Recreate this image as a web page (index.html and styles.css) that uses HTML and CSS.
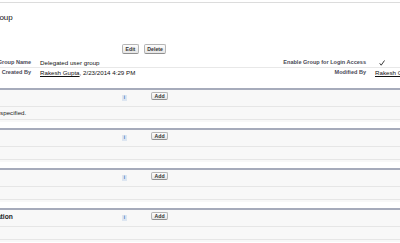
FILE: index.html
```html
<!doctype html>
<html lang="en">
  <head>
    <meta charset="utf-8" />
    <title>Delegated Group</title>
    <link rel="stylesheet" href="styles.css">
  </head>
  <body>
    <div class="page">
      <div class="topRule"></div>
      <h2 class="recordName">Delegated user group</h2>

      <!-- Detail block -->
      <div class="detailButtons">
        <button>Edit</button>
        <button>Delete</button>
      </div>
      <div class="detailList">
        <div class="labelCol">Group Name</div>
        <div class="dataCol">Delegated user group</div>
        <div class="labelCol">Enable Group for Login Access</div>
        <div class="dataCol">
          <svg class="check" width="6" height="6" viewBox="0 0 6 6">
            <path d="M0.7 3.3 L2.2 5.2 L5.5 0.5" fill="none" stroke="#222" stroke-width="0.9" />
          </svg>
        </div>
        <div class="labelCol last">Created By</div>
        <div class="dataCol last"><a href="#">Rakesh Gupta</a>, 2/23/2014 4:29 PM</div>
        <div class="labelCol last">Modified By</div>
        <div class="dataCol last"><a href="#">Rakesh Gupta</a>, 2/23/2014 4:29 PM</div>
      </div>

      <!-- Related lists -->
      <div class="relList">
        <div class="relHeader">
          <div class="relTitle link"></div>
          <span class="help">i</span>
          <button class="small">Add</button>
        </div>
        <div class="relBody">No delegated administrators specified.</div>
      </div>

      <div class="relList">
        <div class="relHeader">
          <div class="relTitle"></div>
          <span class="help">i</span>
          <button class="small">Add</button>
        </div>
        <div class="relBody"></div>
      </div>

      <div class="relList">
        <div class="relHeader">
          <div class="relTitle"></div>
          <span class="help">i</span>
          <button class="small">Add</button>
        </div>
        <div class="relBody"></div>
      </div>

      <div class="relList">
        <div class="relHeader">
          <div class="relTitle">Custom Object Administration</div>
          <span class="help">i</span>
          <button class="small">Add</button>
        </div>
        <div class="relBody"></div>
      </div>
    </div>
  </body>
</html>
```

FILE: styles.css
```css
* {
  box-sizing: border-box;
}
body {
  margin: 0;
  background: #fff;
  color: #222;
  font-family: "Liberation Sans", Arial, sans-serif;
  overflow: hidden;
}
/* the visible window starts 90px into the page */
.page {
  margin-left: -90px;
  width: 600px;
  padding-top: 2px;
}
.topRule {
  height: 1px;
  background: #dcdcdc;
}
.recordName {
  margin: 10px 0 0;
  padding-left: 25.8px;
  font-size: 8px;
  line-height: 10px;
  font-weight: normal;
  color: #111;
}
button {
  font-family: "Liberation Sans", Arial, sans-serif;
  font-size: 5.2px;
  font-weight: bold;
  line-height: 8px;
  color: #333;
  padding: 0 2.5px;
  margin: 0;
  background: linear-gradient(#fdfdfd, #e6e6e6);
  border: 1px solid #b5b5b5;
  border-bottom-color: #8f8f8f;
  border-radius: 2px;
}
button.small {
  line-height: 6px;
}
.detailButtons {
  margin-top: 21px;
  padding-left: 212px;
  display: flex;
  gap: 5px;
}
.detailList {
  margin-top: 4px;
  display: grid;
  grid-template-columns: 124px 220px 115px 1fr;
  font-size: 6.2px;
  line-height: 9px;
}
.labelCol {
  text-align: right;
  padding-right: 3px;
  font-size: 5.55px;
  font-weight: bold;
  color: #4a4a56;
  border-bottom: 1px solid #e8e8e8;
  height: 10px;
}
.dataCol {
  padding-left: 6px;
  color: #111;
  border-bottom: 1px solid #e8e8e8;
  height: 10px;
  white-space: nowrap;
}
.labelCol.last,
.dataCol.last {
  border-bottom: none;
  height: 9px;
}
.dataCol a {
  color: #111;
  text-decoration: underline;
}
.check {
  margin-left: 4px;
  margin-top: 2px;
  display: block;
}
/* related lists */
.relList {
  margin-top: 11px;
  border-top: 2px solid #a6abbb;
  background: #f8f8f8;
  padding-bottom: 2px;
}
.relList + .relList {
  margin-top: 6px;
}
.relHeader {
  height: 17px;
  padding-top: 2px;
  border-bottom: 1px solid #e6e6e6;
  display: flex;
  align-items: flex-start;
}
.relTitle {
  width: 212px;
  padding-left: 6.5px;
  font-size: 6.7px;
  line-height: 9px;
  font-weight: bold;
  color: #222;
  white-space: nowrap;
}
.relTitle.link {
  color: #2a64b0;
}
.help {
  width: 5px;
  height: 6px;
  margin-top: 3px;
  background: #dde6f1;
  color: #3a72bb;
  font-size: 4.5px;
  font-weight: bold;
  line-height: 6px;
  text-align: center;
}
.relHeader button {
  margin-left: 24px;
}
.relBody {
  height: 13px;
  border-bottom: 1px solid #e6e6e6;
  padding-left: 11px;
  font-size: 6.2px;
  line-height: 12px;
  color: #222;
  white-space: nowrap;
}
```
